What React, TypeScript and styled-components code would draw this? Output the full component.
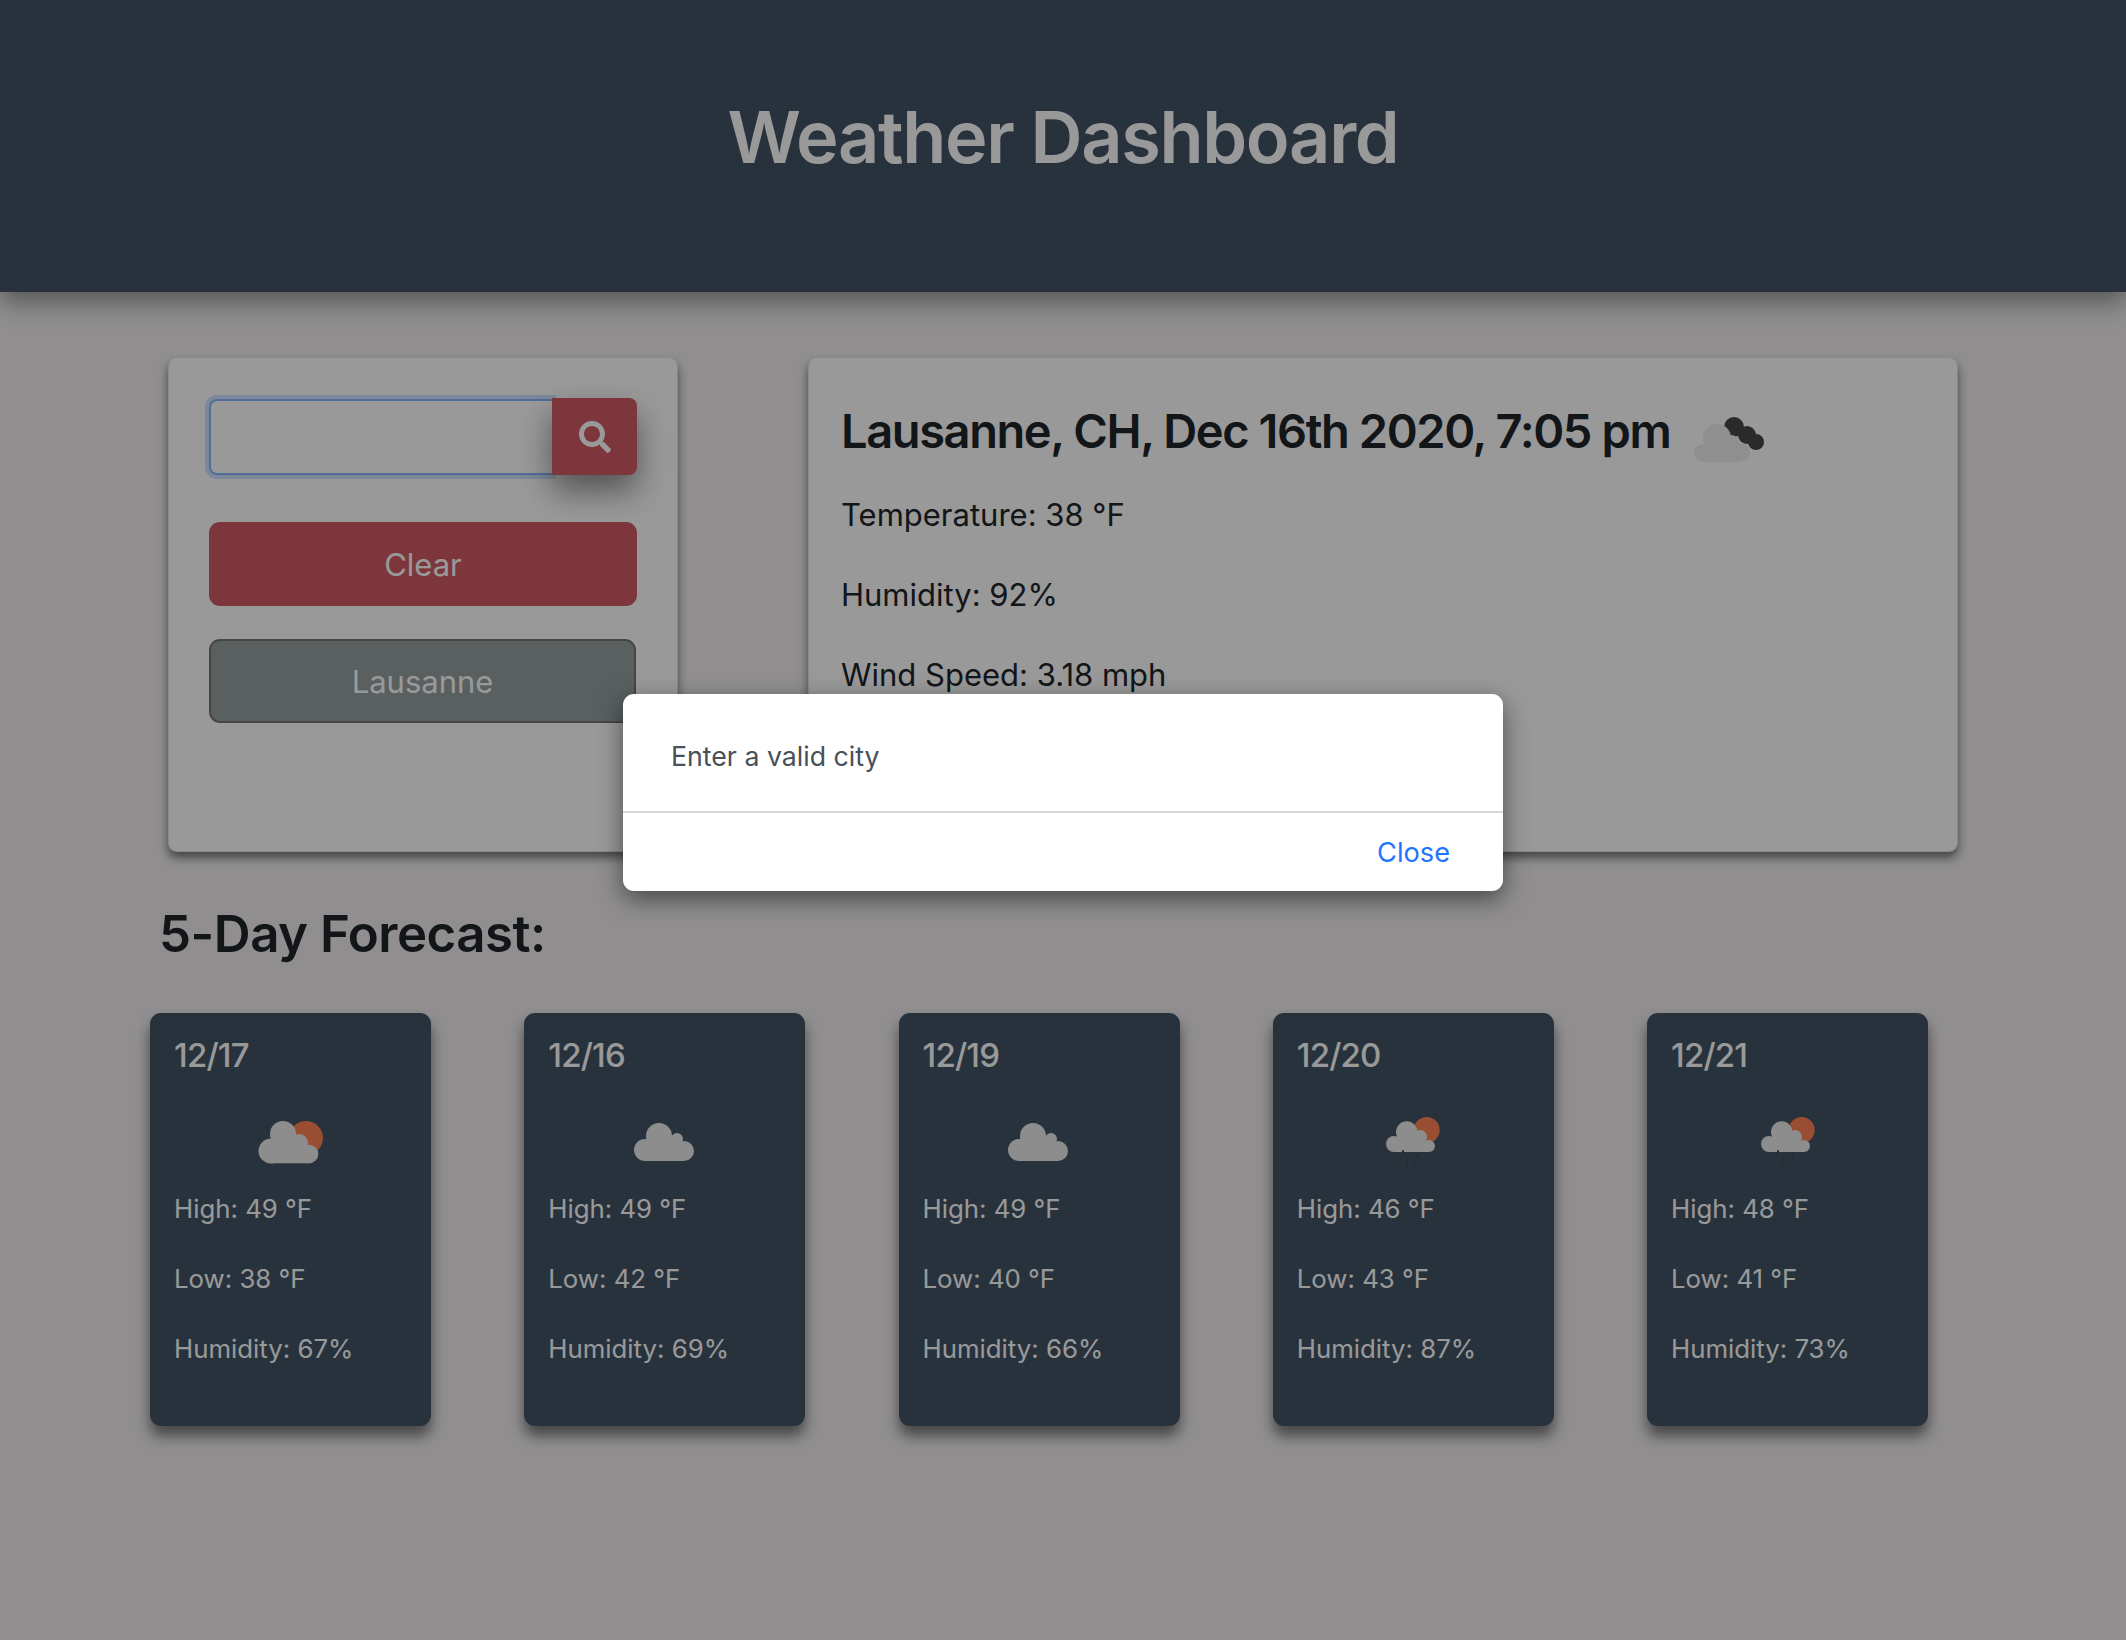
import React from 'react';
import styled, { createGlobalStyle } from 'styled-components';
import { FaSearch } from 'react-icons/fa';

const GlobalStyle = createGlobalStyle`
    html, body {
        margin: 0;
        padding: 0;
        height: 100%;
    }
    body {
        background-color: #f0edef;
        font-family: Inter, "Liberation Sans", sans-serif;
        color: #212529;
        overflow: hidden;
    }
    * {
        box-sizing: border-box;
    }
`;

const Page = styled.div`
    position: relative;
    width: 2126px;
    height: 1640px;
`;

const Header = styled.header`
    height: 292px;
    padding-top: 89px;
    background-color: #415466;
    box-shadow: 0 10px 24px rgba(0, 0, 0, 0.4);
    text-align: center;
`;

const Title = styled.h1`
    margin: 0;
    font-size: 72px;
    line-height: 96px;
    font-weight: 600;
    letter-spacing: -1.3px;
    color: #fff;
`;

const TopRow = styled.section`
    display: flex;
    gap: 130px;
    margin-top: 65px;
    padding-left: 168px;
`;

const Panel = styled.div`
    height: 495px;
    background-color: #fff;
    border: 1px solid rgba(0, 0, 0, 0.1);
    border-radius: 9px;
    box-shadow: 0 6px 10px rgba(0, 0, 0, 0.5);
`;

const SearchPanel = styled(Panel)`
    width: 510px;
    padding: 40px 40px 0;
`;

const SearchRow = styled.div`
    display: flex;
    align-items: center;
    width: 428px;
`;

const SearchInput = styled.input`
    flex: 1;
    min-width: 0;
    height: 76px;
    background: #fff;
    border: 2px solid #86b7fe;
    border-right: none;
    border-radius: 8px 0 0 8px;
    outline: none;
    box-shadow: 0 0 0 4px rgba(13, 110, 253, 0.2);
`;

const SearchButton = styled.button`
    position: relative;
    display: flex;
    align-items: center;
    justify-content: center;
    width: 85px;
    height: 77px;
    padding: 0;
    background-color: #d05d64;
    border: none;
    border-radius: 0 8px 8px 0;
    color: #fff;
    font-size: 32px;
    box-shadow: 0 16px 32px rgba(0, 0, 0, 0.45);
`;

const ActionButton = styled.button<{ $tone: 'clear' | 'city' }>`
    display: block;
    width: ${props => (props.$tone === 'clear' ? '428px' : '427px')};
    height: 84px;
    margin-top: ${props => (props.$tone === 'clear' ? '47px' : '33px')};
    background-color: ${props => (props.$tone === 'clear' ? '#d05d64' : '#95a09e')};
    border: ${props => (props.$tone === 'clear' ? 'none' : '2px solid #757575')};
    border-radius: 11px;
    color: #fff;
    font-family: inherit;
    font-size: 31px;
`;

const CurrentPanel = styled(Panel)`
    width: 1150px;
    padding: 42px 32px 0;
`;

const CityRow = styled.div`
    display: flex;
    align-items: center;
    gap: 24px;
    height: 62px;
    margin-bottom: 33px;
`;

const CityName = styled.h3`
    margin: 0;
    font-size: 47px;
    line-height: 62px;
    font-weight: 600;
    letter-spacing: -1.4px;
`;

const CityIcon = styled.div`
    display: flex;
    margin-top: 18px;
`;

const CurrentStat = styled.p`
    margin: 0 0 40px;
    font-size: 31px;
    line-height: 40px;
`;

const ForecastTitle = styled.h2`
    margin: 50px 0 0 159px;
    font-size: 51px;
    line-height: 64px;
    font-weight: 600;
    letter-spacing: -0.5px;
`;

const ForecastRow = styled.section`
    display: flex;
    gap: 93.25px;
    margin-top: 47px;
    padding-left: 150px;
`;

const DayCard = styled.article`
    width: 281px;
    height: 413px;
    padding: 22px 24px 0;
    background-color: #415466;
    border-radius: 11px;
    box-shadow: 0 10px 14px rgba(0, 0, 0, 0.5);
    color: #fff;
`;

const DayDate = styled.h5`
    margin: 0;
    height: 40px;
    font-size: 33px;
    line-height: 40px;
    font-weight: 500;
    letter-spacing: -0.8px;
`;

const DayIconSlot = styled.div`
    display: flex;
    justify-content: center;
    height: 99px;
    margin: 0 -24px;
    padding-top: 41px;
`;

const DayStat = styled.p`
    margin: 0;
    height: 70px;
    padding-top: 17px;
    font-size: 25.8px;
    line-height: 36px;
`;

const Backdrop = styled.div`
    position: absolute;
    inset: 0;
    background-color: rgba(0, 0, 0, 0.4);
`;

const Dialog = styled.div`
    position: absolute;
    left: 623px;
    top: 694px;
    width: 880px;
    background-color: #fff;
    border-radius: 11px;
    box-shadow: 0 8px 24px rgba(0, 0, 0, 0.5);
`;

const DialogBody = styled.div`
    height: 119px;
    padding: 44px 48px 0;
    border-bottom: 2px solid #d6d6d6;
    font-size: 26.7px;
    line-height: 36px;
    color: #495057;
`;

const DialogFooter = styled.div`
    display: flex;
    justify-content: flex-end;
    height: 78px;
    padding: 22px 53px 0 0;
`;

const CloseButton = styled.button`
    height: 36px;
    padding: 0;
    background: none;
    border: none;
    font-family: inherit;
    font-size: 27.2px;
    line-height: 36px;
    color: #1f74ff;
`;

const CLOUD = '#ebebeb';
const SUN = '#ff8355';
const DARK = '#474747';

const Puffs: React.FC<{ fill: string; puffs: number[][] }> = ({ fill, puffs }) => (
    <g fill={fill}>
        {puffs.map(([cx, cy, r]) => <circle key={`${cx}-${cy}`} cx={cx} cy={cy} r={r} />)}
    </g>
);

const SoftIcon = styled.svg`
    display: block;
    flex: none;
    filter: blur(0.6px);
`;

// openweather style icons, drawn in real pixels
const PartlyCloudy = () => (
    <SoftIcon width="65" height="48" viewBox="0 -4 65 48">
        <circle cx="48" cy="18" r="17" fill={SUN} />
        <Puffs fill={CLOUD} puffs={[[13, 31, 12.5], [25, 14, 13], [41, 23, 9], [51, 34, 9.3]]} />
        <rect x="13" y="25" width="38" height="18.3" fill={CLOUD} />
        <rect x="20" y="18" width="24" height="12" fill={CLOUD} />
    </SoftIcon>
);

const Overcast = () => (
    <SoftIcon width="62" height="45" viewBox="0 -7 62 45">
        <Puffs fill={CLOUD} puffs={[[11, 27, 11], [25, 13, 13], [43, 16, 6], [50, 28, 10]]} />
        <rect x="11" y="22" width="39" height="16" fill={CLOUD} />
        <rect x="20" y="14" width="22" height="10" fill={CLOUD} />
    </SoftIcon>
);

const RainCloud = () => (
    <SoftIcon width="54" height="52" viewBox="0 -1 54 52">
        <circle cx="40.7" cy="13" r="13" fill={SUN} />
        <Puffs fill={CLOUD} puffs={[[8, 27, 8], [20.7, 15, 10.7], [34, 20, 7], [43, 29, 6]]} />
        <rect x="8" y="24" width="35" height="11" fill={CLOUD} />
        <rect x="16" y="16" width="20" height="10" fill={CLOUD} />
        <g stroke={DARK} strokeWidth="2" strokeLinecap="round">
            <path d="M17 34v2.5M14.5 42l-1 2.5M22.5 40.5l-1 2.5M32 37.5l-1 2M29 47l-.6 1.5M21 47l-.6 1.5" />
        </g>
    </SoftIcon>
);

const BrokenClouds = () => (
    <SoftIcon width="70" height="46" viewBox="0 0 70 46">
        <Puffs fill={DARK} puffs={[[40, 10, 10], [53, 18, 9], [62, 25, 8]]} />
        <Puffs fill="#efefef" puffs={[[9, 36, 9], [23, 21, 14], [37, 26, 8], [47, 35, 9]]} />
        <rect x="9" y="30" width="38" height="15" fill="#efefef" />
    </SoftIcon>
);

const forecast = [
    { date: '12/17', high: 49, low: 38, humidity: 67, icon: <PartlyCloudy /> },
    { date: '12/16', high: 49, low: 42, humidity: 69, icon: <Overcast /> },
    { date: '12/19', high: 49, low: 40, humidity: 66, icon: <Overcast /> },
    { date: '12/20', high: 46, low: 43, humidity: 87, icon: <RainCloud /> },
    { date: '12/21', high: 48, low: 41, humidity: 73, icon: <RainCloud /> },
];

const App: React.FC = () => (
    <Page>
        <GlobalStyle />
        <Header>
            <Title>Weather Dashboard</Title>
        </Header>
        <TopRow>
            <SearchPanel>
                <SearchRow>
                    <SearchInput />
                    <SearchButton aria-label="Search"><FaSearch /></SearchButton>
                </SearchRow>
                <ActionButton $tone="clear">Clear</ActionButton>
                <ActionButton $tone="city">Lausanne</ActionButton>
            </SearchPanel>
            <CurrentPanel>
                <CityRow>
                    <CityName>Lausanne, CH, Dec 16th 2020, 7:05 pm</CityName>
                    <CityIcon><BrokenClouds /></CityIcon>
                </CityRow>
                <CurrentStat>Temperature: 38 °F</CurrentStat>
                <CurrentStat>Humidity: 92%</CurrentStat>
                <CurrentStat>Wind Speed: 3.18 mph</CurrentStat>
            </CurrentPanel>
        </TopRow>
        <ForecastTitle>5-Day Forecast:</ForecastTitle>
        <ForecastRow>
            {forecast.map(day => (
                <DayCard key={day.date}>
                    <DayDate>{day.date}</DayDate>
                    <DayIconSlot>{day.icon}</DayIconSlot>
                    <DayStat>High: {day.high} °F</DayStat>
                    <DayStat>Low: {day.low} °F</DayStat>
                    <DayStat>Humidity: {day.humidity}%</DayStat>
                </DayCard>
            ))}
        </ForecastRow>
        <Backdrop />
        <Dialog>
            <DialogBody>Enter a valid city</DialogBody>
            <DialogFooter>
                <CloseButton>Close</CloseButton>
            </DialogFooter>
        </Dialog>
    </Page>
);

export default App;
